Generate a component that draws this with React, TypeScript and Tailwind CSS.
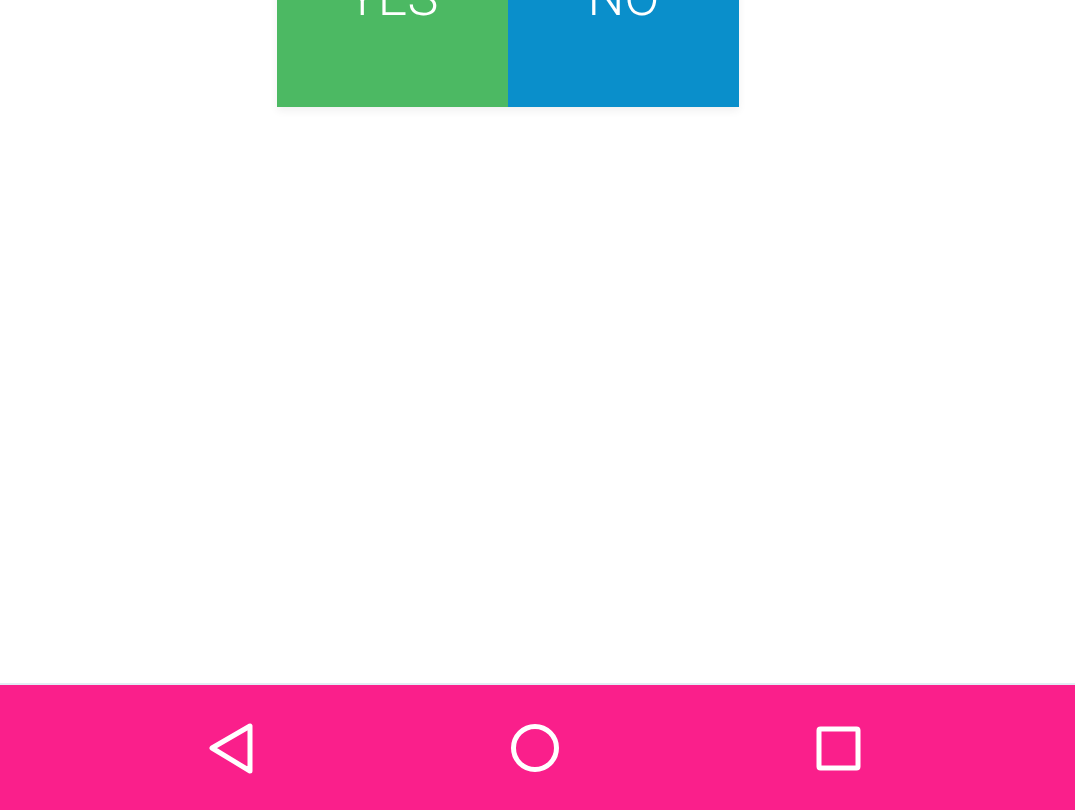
export default function App() {
  return (
    <div className="h-[810px] w-full flex flex-col bg-white overflow-hidden" style={{ fontFamily: 'Roboto, "Liberation Sans", sans-serif' }}>
      <div className="flex-1 flex pl-[277px]">
        <div className="w-[462px] h-[160px] -mt-[53px] flex shadow-[0_4px_8px_rgba(0,0,0,0.06)]">
          <button className="flex-1 bg-[#4cb963] text-white text-[52px] font-light leading-none pt-[25px] flex justify-center items-start">
            YES
          </button>
          <button className="flex-1 bg-[#0a8fcb] text-white text-[52px] font-light leading-none pt-[25px] flex justify-center items-start">
            NO
          </button>
        </div>
      </div>
      <nav className="h-[127px] border-t-2 border-[#e3eaf4] bg-[#fa1f8b] flex items-center justify-center gap-[243px] pr-[5px] pt-[2px]">
        <svg width="60" height="60" viewBox="0 0 60 60" fill="none" stroke="white" strokeWidth="5" strokeLinejoin="round">
          <path d="M10 29 L48 7 L48 52 Z" />
        </svg>
        <svg width="60" height="60" viewBox="0 0 60 60" fill="none" stroke="white" strokeWidth="5">
          <circle cx="30" cy="29" r="21.5" />
        </svg>
        <svg width="60" height="60" viewBox="0 0 60 60" fill="none" stroke="white" strokeWidth="5" strokeLinejoin="round">
          <rect x="11" y="10" width="39" height="39" rx="1.5" />
        </svg>
      </nav>
    </div>
  );
}
